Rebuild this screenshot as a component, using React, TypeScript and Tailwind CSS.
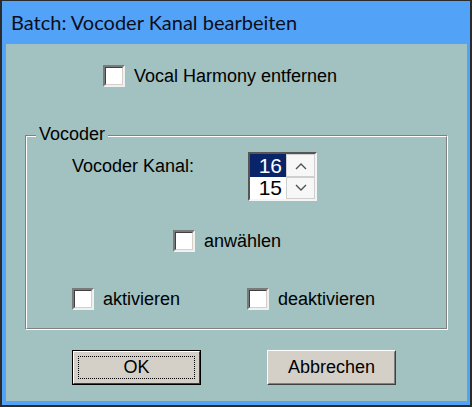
import React from 'react';

const labelFont = { fontFamily: '"Liberation Sans", Arial, sans-serif' };

const CheckBox: React.FC<{ label: string }> = ({ label }) => (
    <div className="flex items-center gap-[9px]">
        <div className="w-[22px] h-[22px] border-2 border-t-[#7a7a7a] border-l-[#7a7a7a] border-r-[#f0f0f0] border-b-[#f0f0f0]">
            <div className="w-full h-full border border-t-[#404040] border-l-[#404040] border-r-[#d4d0c8] border-b-[#d4d0c8] bg-white" />
        </div>
        <span className="text-[18px] leading-[21px] text-black">{label}</span>
    </div>
);

const Chevron: React.FC<{ up?: boolean }> = ({ up }) => (
    <svg width="12" height="8" viewBox="0 0 12 8">
        <path d={up ? 'M1 7 L6 2 L11 7' : 'M1 1 L6 6 L11 1'} fill="none" stroke="#505050" strokeWidth="1.4" />
    </svg>
);

const SpinBox: React.FC = () => (
    <div className="w-[69px] h-[49px] border-2 border-t-[#555] border-l-[#555] border-r-[#f4f4f4] border-b-[#f4f4f4] flex">
        {/* numbers */}
        <div className="w-[36px] flex flex-col bg-white">
            <div className="h-[23px] bg-[#0a246a] text-white text-[21px] leading-[23px] text-right pr-[4px]">16</div>
            <div className="h-[22px] text-black text-[21px] leading-[22px] text-right pr-[4px]">15</div>
        </div>
        {/* arrows */}
        <div className="flex-1 flex flex-col">
            <div className="h-[23px] bg-[#f7f7f7] border border-[#cfcfcf] flex items-center justify-center">
                <Chevron up />
            </div>
            <div className="h-[22px] bg-[#f7f7f7] border border-[#cfcfcf] flex items-center justify-center">
                <Chevron />
            </div>
        </div>
    </div>
);

export default function App() {
    return (
        <div className="w-[472px] h-[407px] bg-[#52a3f7] border-2 border-t border-[#2b2b2b] flex flex-col" style={labelFont}>
            {/* Title bar */}
            <div className="h-[43px] flex items-center pl-[9px] pb-[2px]">
                <span className="text-[20px] text-[#0d0d1c]" style={{ fontFamily: 'Lato, "Liberation Sans", sans-serif' }}>
                    Batch: Vocoder Kanal bearbeiten
                </span>
            </div>

            {/* Client area */}
            <div className="flex-1 pl-[4px] pr-[3px] pb-[4px] flex">
                <div className="flex-1 bg-[#a2c1c1] flex flex-col">
                    <div className="mt-[21px] ml-[97px]">
                        <CheckBox label="Vocal Harmony entfernen" />
                    </div>

                    {/* Group box */}
                    <div className="relative mt-[48px] ml-[19px] w-[423px] border border-t-[#808080] border-l-[#808080] border-r-white border-b-white">
                        <span className="absolute top-[-12px] left-[10px] px-[3px] bg-[#a2c1c1] text-[18px] leading-[21px] text-black">Vocoder</span>
                        <div className="border border-t-white border-l-white border-r-[#808080] border-b-[#808080] pt-[15px] pb-[18px] flex flex-col">
                            <div className="flex items-start pl-[45px]">
                                <span className="w-[176px] mt-[4px] text-[18px] leading-[21px] text-black">Vocoder Kanal:</span>
                                <SpinBox />
                            </div>
                            <div className="mt-[29px] pl-[146px]">
                                <CheckBox label="anwählen" />
                            </div>
                            <div className="mt-[36px] pl-[45px] flex">
                                <div className="w-[175px]">
                                    <CheckBox label="aktivieren" />
                                </div>
                                <CheckBox label="deaktivieren" />
                            </div>
                        </div>
                    </div>

                    {/* Buttons */}
                    <div className="mt-[20px] ml-[66px] flex gap-[66px]">
                        <button className="w-[129px] h-[35px] border border-black bg-[#d4d0c8] p-0">
                            <div className="w-full h-full border border-t-white border-l-white border-r-[#404040] border-b-[#404040] p-[4px]">
                                <div className="w-full h-full border border-dotted border-black flex items-center justify-center text-[18px] leading-[21px] text-black">
                                    OK
                                </div>
                            </div>
                        </button>
                        <button className="w-[129px] h-[35px] border border-t-white border-l-white border-r-[#404040] border-b-[#404040] bg-[#d4d0c8] p-0">
                            <div className="w-full h-full border border-t-[#d4d0c8] border-l-[#d4d0c8] border-r-[#808080] border-b-[#808080] flex items-center justify-center text-[18px] leading-[21px] text-black">
                                Abbrechen
                            </div>
                        </button>
                    </div>
                </div>
            </div>
        </div>
    );
}
